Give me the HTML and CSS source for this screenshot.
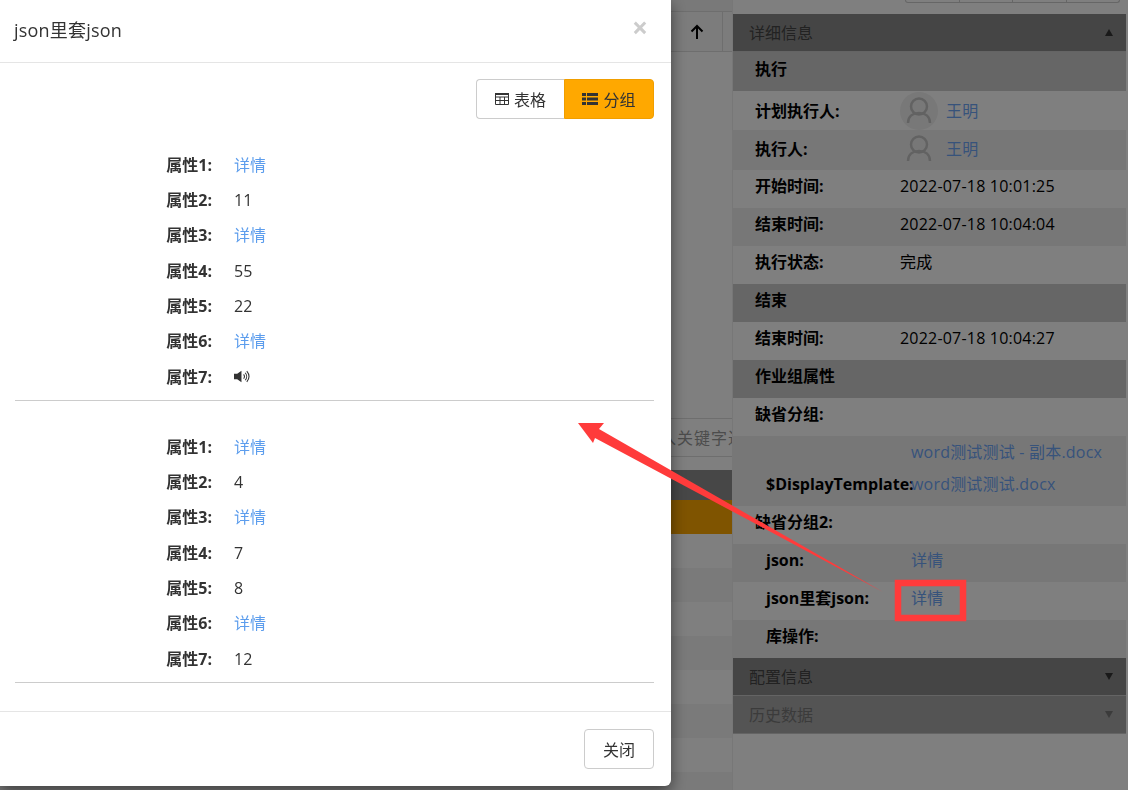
FILE: index.html
```html
<!DOCTYPE html>
<html lang="en">

<head>
    <meta charset="UTF-8">
    <meta name="viewport" content="width=device-width, initial-scale=1.0">
    <title>json里套json</title>
    <link rel="stylesheet" href="styles.css">
</head>

<body>

    <div class="page">
        <div class="main">
            <div class="toolbar"></div>
            <div class="table-head">
                <div class="head-cell">
                    <svg width="14" height="16" viewBox="0 0 14 16"><path d="M7 15V2M1.5 7.5 7 2l5.500 5.500" fill="none" stroke="#000" stroke-width="2"/></svg>
                </div>
                <div class="head-end"></div>
            </div>
            <div class="search">
                <div class="search-input">请输入关键字过滤</div>
            </div>
            <div class="list-head"></div>
            <div class="list-row selected"></div>
            <div class="list-row"></div>
            <div class="list-row alt"></div>
            <div class="list-row"></div>
            <div class="list-row alt"></div>
            <div class="list-row"></div>
            <div class="list-row alt"></div>
            <div class="list-row"></div>
            <div class="list-row alt"></div>
        </div>

        <div class="side">
            <div class="btn-strip">
                <span></span><span></span><span></span><span></span>
            </div>
            <div class="panel-head">详细信息<i class="caret up"></i></div>
            <div class="row section first">执行</div>
            <div class="row avatar-row">
                <label>计划执行人:</label>
                <div class="avatar hover">
                    <svg width="38" height="38" viewBox="0 0 38 38"><circle cx="19" cy="14.500" r="8" fill="none" stroke="#c4c4c4" stroke-width="2.500"/><path d="M8 31c0-7 5-10 11-10s11 3 11 10" fill="none" stroke="#c4c4c4" stroke-width="2.500"/></svg>
                </div>
                <a class="link">王明</a>
            </div>
            <div class="row avatar-row tall alt">
                <label>执行人:</label>
                <div class="avatar">
                    <svg width="38" height="38" viewBox="0 0 38 38"><circle cx="19" cy="14.500" r="8" fill="none" stroke="#c4c4c4" stroke-width="2.500"/><path d="M8 31c0-7 5-10 11-10s11 3 11 10" fill="none" stroke="#c4c4c4" stroke-width="2.500"/></svg>
                </div>
                <a class="link">王明</a>
            </div>
            <div class="row"><label>开始时间:</label><span>2022-07-18 10:01:25</span></div>
            <div class="row alt"><label>结束时间:</label><span>2022-07-18 10:04:04</span></div>
            <div class="row"><label>执行状态:</label><span>完成</span></div>
            <div class="row section">结束</div>
            <div class="row"><label>结束时间:</label><span>2022-07-18 10:04:27</span></div>
            <div class="row section">作业组属性</div>
            <div class="row"><label>缺省分组:</label></div>
            <div class="row nested alt files">
                <label>$DisplayTemplate:</label>
                <div class="file-list">
                    <a class="link">word测试测试 - 副本.docx</a>
                    <a class="link">word测试测试.docx</a>
                </div>
            </div>
            <div class="row"><label>缺省分组2:</label></div>
            <div class="row nested alt"><label>json:</label><a class="link">详情</a></div>
            <div class="row nested"><label>json里套json:</label><a class="link">详情</a></div>
            <div class="row nested alt"><label>库操作:</label></div>
            <div class="panel-head">配置信息<i class="caret"></i></div>
            <div class="panel-head disabled">历史数据<i class="caret"></i></div>
        </div>
    </div>

    <div class="backdrop"></div>

    <div class="modal">
        <div class="modal-header">
            <h4>json里套json</h4>
            <span class="close">×</span>
        </div>
        <div class="modal-body">
            <div class="toggle">
                <button class="toggle-btn">
                    <svg width="14" height="12" viewBox="0 0 14 12"><path d="M.5.500h13v11H.5zM.5 4h13M.5 7.500h13M5 4v7.500M9.500 4v7.500" fill="none" stroke="#333"/><path d="M0 0h14v2H0z" fill="#333"/></svg>
                    表格
                </button>
                <button class="toggle-btn active">
                    <svg width="16" height="12" viewBox="0 0 16 12"><path d="M0 0h4v3H0zM5 0h11v3H5zM0 4.500h4v3H0zM5 4.500h11v3H5zM0 9h4v3H0zM5 9h11v3H5z" fill="#333"/></svg>
                    分组
                </button>
            </div>

            <div class="group">
                <div class="prop"><label>属性1:</label><a>详情</a></div>
                <div class="prop"><label>属性2:</label><span>11</span></div>
                <div class="prop"><label>属性3:</label><a>详情</a></div>
                <div class="prop"><label>属性4:</label><span>55</span></div>
                <div class="prop"><label>属性5:</label><span>22</span></div>
                <div class="prop"><label>属性6:</label><a>详情</a></div>
                <div class="prop">
                    <label>属性7:</label>
                    <svg class="sound" width="16" height="15" viewBox="0 0 15 14"><path d="M0 4.500h3L7 1.500v11l-4-3H0z" fill="#333"/><path d="M9 5c1 1.200 1 2.800 0 4M10.500 3.500c1.800 2 1.800 5 0 7M12 2c2.500 3 2.500 7 0 10" fill="none" stroke="#333"/></svg>
                </div>
            </div>

            <div class="group">
                <div class="prop"><label>属性1:</label><a>详情</a></div>
                <div class="prop"><label>属性2:</label><span>4</span></div>
                <div class="prop"><label>属性3:</label><a>详情</a></div>
                <div class="prop"><label>属性4:</label><span>7</span></div>
                <div class="prop"><label>属性5:</label><span>8</span></div>
                <div class="prop"><label>属性6:</label><a>详情</a></div>
                <div class="prop"><label>属性7:</label><span>12</span></div>
            </div>
        </div>
        <div class="modal-footer">
            <button class="btn-close">关闭</button>
        </div>
    </div>

    <!-- annotation drawn on top of the screenshot -->
    <svg class="mark" width="1128" height="790" viewBox="0 0 1128 790">
        <path d="M578 423 604 423 599 429 883 592 595 438 593 443z" fill="#ff3b3b"/>
        <rect x="898" y="583" width="65" height="35" fill="none" stroke="#ff3b3b" stroke-width="6.500"/>
    </svg>

</body>

</html>
```

FILE: styles.css
```css
html,
body {
    margin: 0;
    padding: 0;
    height: 100%;
    overflow: hidden;
}

body {
    font-family: "Open Sans", "Noto Sans CJK SC", sans-serif;
    font-size: 16px;
    line-height: 24px;
    color: #333;
    background-color: #fff;
}

.page {
    display: flex;
    width: 1128px;
    height: 790px;
}

/* page behind the dialog */
.main {
    width: 732px;
    flex-shrink: 0;
    overflow: hidden;
    border-right: 1px solid #eee;
}

.toolbar {
    height: 12px;
    box-sizing: border-box;
    border-bottom: 1px solid #ddd;
    background-color: #f2f2f2;
}

.table-head {
    display: flex;
    justify-content: flex-end;
    height: 40px;
    box-sizing: border-box;
    border-bottom: 1px solid #ddd;
    background-color: #f8f8f8;
}

.head-cell {
    display: flex;
    align-items: center;
    justify-content: center;
    width: 51px;
    border-right: 1px solid #ddd;
}

.head-end {
    width: 9px;
}

.search {
    margin-top: 366px;
    height: 39px;
    box-sizing: border-box;
    border-top: 1px solid #ddd;
    border-bottom: 1px solid #ddd;
    padding-left: 626px;
    white-space: nowrap;
    letter-spacing: 1px;
    color: #999;
}

.search-input {
    padding-top: 7px;
}

.list-head {
    margin-top: 13px;
    height: 30px;
    background-color: #8f8f8f;
}

.list-row {
    height: 34px;
    background-color: #fff;
}

.list-row.alt {
    background-color: #f4f4f4;
}

.list-row.selected {
    background-color: #ffa800;
}

/* right details column */
.side {
    width: 393px;
    flex-shrink: 0;
    color: #000;
}

.btn-strip {
    display: flex;
    margin-left: 172px;
    width: 215px;
    height: 14px;
    box-sizing: border-box;
    padding-bottom: 11px;
}

.btn-strip span {
    flex: 1;
    border: 1px solid #ccc;
    border-top: none;
    border-left-width: 0;
}

.btn-strip span:first-child {
    border-left-width: 1px;
    border-bottom-left-radius: 4px;
}

.btn-strip span:last-child {
    border-bottom-right-radius: 4px;
}

.panel-head {
    display: flex;
    align-items: center;
    justify-content: space-between;
    height: 38px;
    box-sizing: border-box;
    padding: 0 13px 0 16px;
    background-color: #8b8b8b;
    color: #444;
    border-bottom: 1px solid #c8c8c8;
}

.panel-head.disabled {
    background-color: #a8a8a8;
    color: #777;
}

.caret {
    width: 0;
    height: 0;
    border-left: 4px solid transparent;
    border-right: 4px solid transparent;
    border-top: 7px solid #333;
}

.disabled .caret {
    border-top-color: #777;
}

.caret.up {
    border-top: none;
    border-bottom: 7px solid #333;
}

.row {
    display: flex;
    align-items: flex-start;
    height: 38px;
    box-sizing: border-box;
    padding: 4px 0 0 22px;
    background-color: #fff;
    letter-spacing: 0.2px;
}

.row.alt {
    background-color: #efefef;
}

.row label {
    width: 145px;
    flex-shrink: 0;
    font-weight: bold;
    letter-spacing: 0;
}

.row.section {
    background-color: #cdcdcd;
    font-weight: bold;
    letter-spacing: 0;
}

.row.first {
    height: 39px;
    padding-top: 5px;
}

.row.nested {
    padding-left: 33px;
}

.avatar-row {
    align-items: center;
    height: 39px;
    padding-top: 0;
}

.avatar-row.tall {
    height: 40px;
    padding-bottom: 3px;
}

.avatar {
    width: 38px;
    height: 38px;
    margin-right: 8px;
}

.avatar.hover {
    border-radius: 50%;
    background-color: #f0f0f0;
}

.row.files {
    align-items: flex-end;
    height: 70px;
    padding-top: 0;
    padding-bottom: 10px;
}

.file-list {
    display: flex;
    flex-direction: column;
    gap: 8px;
}

.link {
    color: #6ea6f7;
}

/* dialog */
.backdrop {
    position: fixed;
    top: 0;
    left: 0;
    width: 100%;
    height: 100%;
    background-color: rgba(0, 0, 0, 0.5);
}

.modal {
    position: fixed;
    top: 0;
    left: 0;
    width: 671px;
    height: 786px;
    display: flex;
    flex-direction: column;
    background-color: #fff;
    border-radius: 0 0 6px 0;
    box-shadow: 0 5px 15px rgba(0, 0, 0, 0.5);
}

.modal-header {
    display: flex;
    justify-content: space-between;
    height: 63px;
    box-sizing: border-box;
    padding: 17px 23px 0 14px;
    border-bottom: 1px solid #e5e5e5;
}

.modal-header h4 {
    margin: 0;
    font-size: 18px;
    font-weight: normal;
    line-height: 26px;
    letter-spacing: 0.2px;
}

.close {
    font-size: 28px;
    font-weight: bold;
    line-height: 21px;
    color: #ccc;
}

.modal-body {
    flex: 1;
    padding: 16px 17px 0 15px;
}

.toggle {
    display: flex;
    justify-content: flex-end;
    margin-bottom: 28.400px;
}

.toggle-btn {
    display: flex;
    align-items: center;
    justify-content: center;
    gap: 5px;
    width: 88px;
    height: 40px;
    padding: 0;
    font-family: inherit;
    font-size: 16px;
    color: #333;
    background-color: #fff;
    border: 1px solid #ccc;
    border-right: none;
    border-radius: 4px 0 0 4px;
}

.toggle-btn.active {
    width: 90px;
    background-color: #ffa800;
    border: 1px solid #f09e00;
    border-radius: 0 4px 4px 0;
}

.group {
    padding-bottom: 5.600px;
    margin-bottom: 28.400px;
    border-bottom: 1px solid #ccc;
}

.prop {
    display: flex;
    align-items: center;
    height: 35.300px;
}

.prop label {
    width: 197px;
    margin-right: 22px;
    text-align: right;
    font-weight: bold;
}

.prop a {
    color: #5c9ded;
}

.sound {
    display: block;
}

.modal-footer {
    display: flex;
    justify-content: flex-end;
    height: 75px;
    box-sizing: border-box;
    padding: 17px 17px 0 0;
    border-top: 1px solid #e5e5e5;
}

.btn-close {
    width: 70px;
    height: 40px;
    padding: 0;
    font-family: inherit;
    font-size: 16px;
    color: #333;
    background-color: #fff;
    border: 1px solid #ccc;
    border-radius: 4px;
}

.mark {
    position: fixed;
    top: 0;
    left: 0;
    pointer-events: none;
}
```
